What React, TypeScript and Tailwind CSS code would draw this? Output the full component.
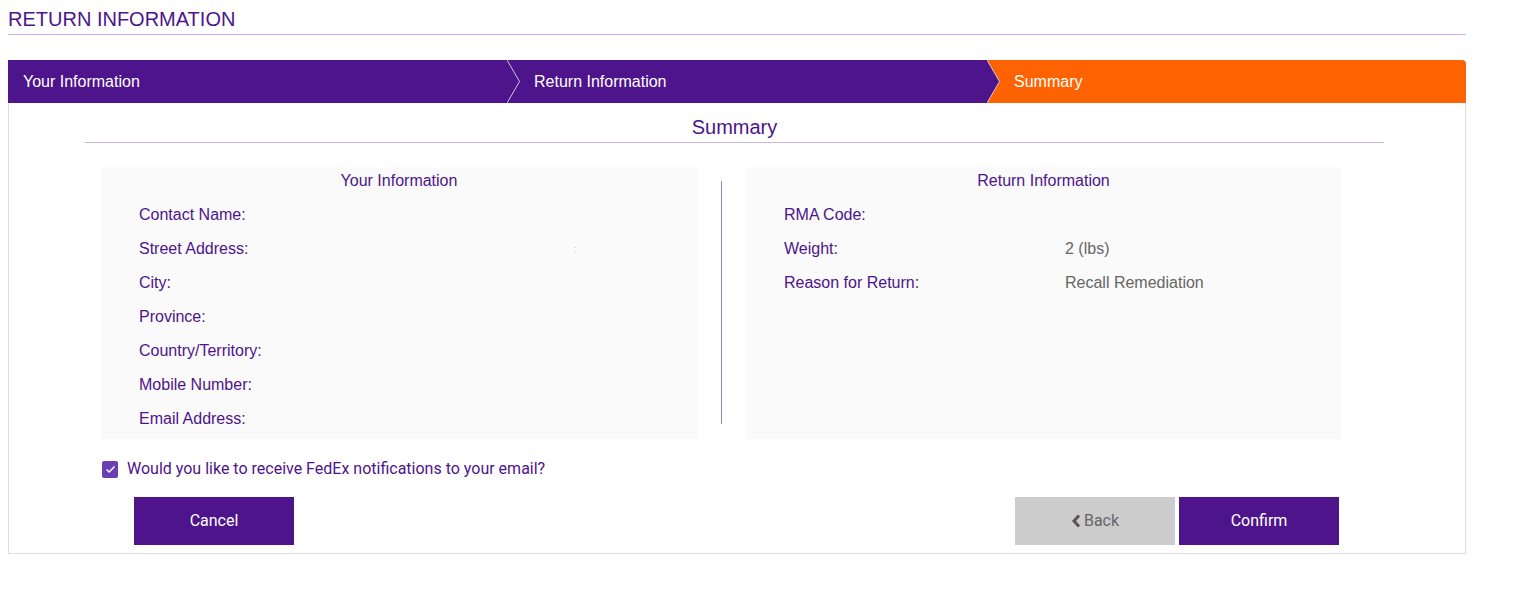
import React from "react";

const PURPLE = "#4d148c";

const yourInfo = [
  "Contact Name:",
  "Street Address:",
  "City:",
  "Province:",
  "Country/Territory:",
  "Mobile Number:",
  "Email Address:",
];

const returnInfo: [string, string][] = [
  ["RMA Code:", ""],
  ["Weight:", "2 (lbs)"],
  ["Reason for Return:", "Recall Remediation"],
];

function StepChevron({ from }: { from: string }) {
  // arrow tip of the previous step, drawn over the start of the next one
  return (
    <svg
      className="absolute left-0 top-0 h-[43px] w-[16px]"
      viewBox="0 0 16 43"
      preserveAspectRatio="none"
    >
      <polygon points="0,0 12.5,21.5 0,43" fill={from} />
      <polyline points="0,0 12.5,21.5 0,43" fill="none" stroke="#cfc6dc" strokeWidth="1" />
    </svg>
  );
}

function Panel({ title, children }: { title: string; children: React.ReactNode }) {
  return (
    <div className="bg-[#fafafa] pb-[3px] pt-px">
      <div className="h-[26px] text-center text-[16px] leading-[26px] text-[#4d148c]">{title}</div>
      <div className="mt-[4px] pl-[38px]">{children}</div>
    </div>
  );
}

export default function App() {
  return (
    <div className="min-h-[602px] bg-white font-['Liberation_Sans',Arial,sans-serif]">
      <div className="ml-2 w-[1458px]">
        <h1 className="border-b border-[#d6a8ef] pb-[3px] pt-[7px] text-[20px] font-normal leading-[24px] text-[#4d148c]">
          RETURN INFORMATION
        </h1>

        <div className="mt-[25px] rounded-tr-[5px] border border-t-0 border-[#dddddd] pb-[8px]">
          <div className="-ml-px flex h-[43px] text-[16px] leading-[43px] text-white">
            <div className="w-[499px] bg-[#4d148c] pl-[15px]">Your Information</div>
            <div className="relative w-[480px] bg-[#4d148c] pl-[27px]">
              <StepChevron from={PURPLE} />
              <span className="relative">Return Information</span>
            </div>
            <div className="relative -mr-px flex-1 rounded-tr-[4px] bg-[#ff6200] pl-[27px]">
              <StepChevron from={PURPLE} />
              <span className="relative">Summary</span>
            </div>
          </div>

          <div className="ml-[76px] w-[1299px] border-b border-[#cbb6e3] pb-[3px] pt-[12px] text-center text-[20px] leading-[24px] text-[#4d148c]">
            Summary
          </div>

          <div className="ml-[92px] mt-[24px] grid grid-cols-[596px_49px_595px]">
            <Panel title="Your Information">
              {yourInfo.map((label) => (
                <div key={label} className="flex h-[34px] leading-[34px] text-[16px] text-[#4d148c]">
                  <span className="w-[281px]">{label}</span>
                  {label === "Street Address:" && (
                    <span className="pl-[154px] text-[9px] text-[#a9c4ee]">:</span>
                  )}
                </div>
              ))}
            </Panel>

            <div className="flex justify-center pb-[15px] pt-[14px]">
              <div className="w-px bg-[#9c7db8]" />
            </div>

            <Panel title="Return Information">
              {returnInfo.map(([label, value]) => (
                <div key={label} className="flex h-[34px] text-[16px] leading-[34px]">
                  <span className="w-[281px] text-[#4d148c]">{label}</span>
                  <span className="text-[#666666]">{value}</span>
                </div>
              ))}
            </Panel>
          </div>

          <label className="ml-[93px] mt-[18px] flex h-[24px] items-center gap-[9px] font-['Roboto',sans-serif] text-[16px] text-[#4d148c]">
            <span className="flex h-[17px] w-[16px] items-center justify-center rounded-[2px] bg-[#6b3fb3]">
              <svg width="11" height="9" viewBox="0 0 11 9">
                <polyline points="1.5,4.5 4.2,7 9.5,1.5" fill="none" stroke="white" strokeWidth="1.4" />
              </svg>
            </span>
            Would you like to receive FedEx notifications to your email?
          </label>

          <div className="mt-[16px] flex justify-between pl-[125px] pr-[126px] font-['Roboto',sans-serif] text-[16px]">
            <button className="h-[48px] w-[160px] bg-[#4d148c] font-normal text-white">Cancel</button>
            <div className="flex gap-[4px]">
              <button className="flex h-[48px] w-[160px] items-center justify-center gap-[3px] bg-[#cccccc] text-[#666666]">
                <svg width="10" height="14" viewBox="0 0 10 14">
                  <polyline points="8,1.5 3,7 8,12.5" fill="none" stroke="#555555" strokeWidth="3" />
                </svg>
                Back
              </button>
              <button className="h-[48px] w-[160px] bg-[#4d148c] font-normal text-white">Confirm</button>
            </div>
          </div>
        </div>
      </div>
    </div>
  );
}
